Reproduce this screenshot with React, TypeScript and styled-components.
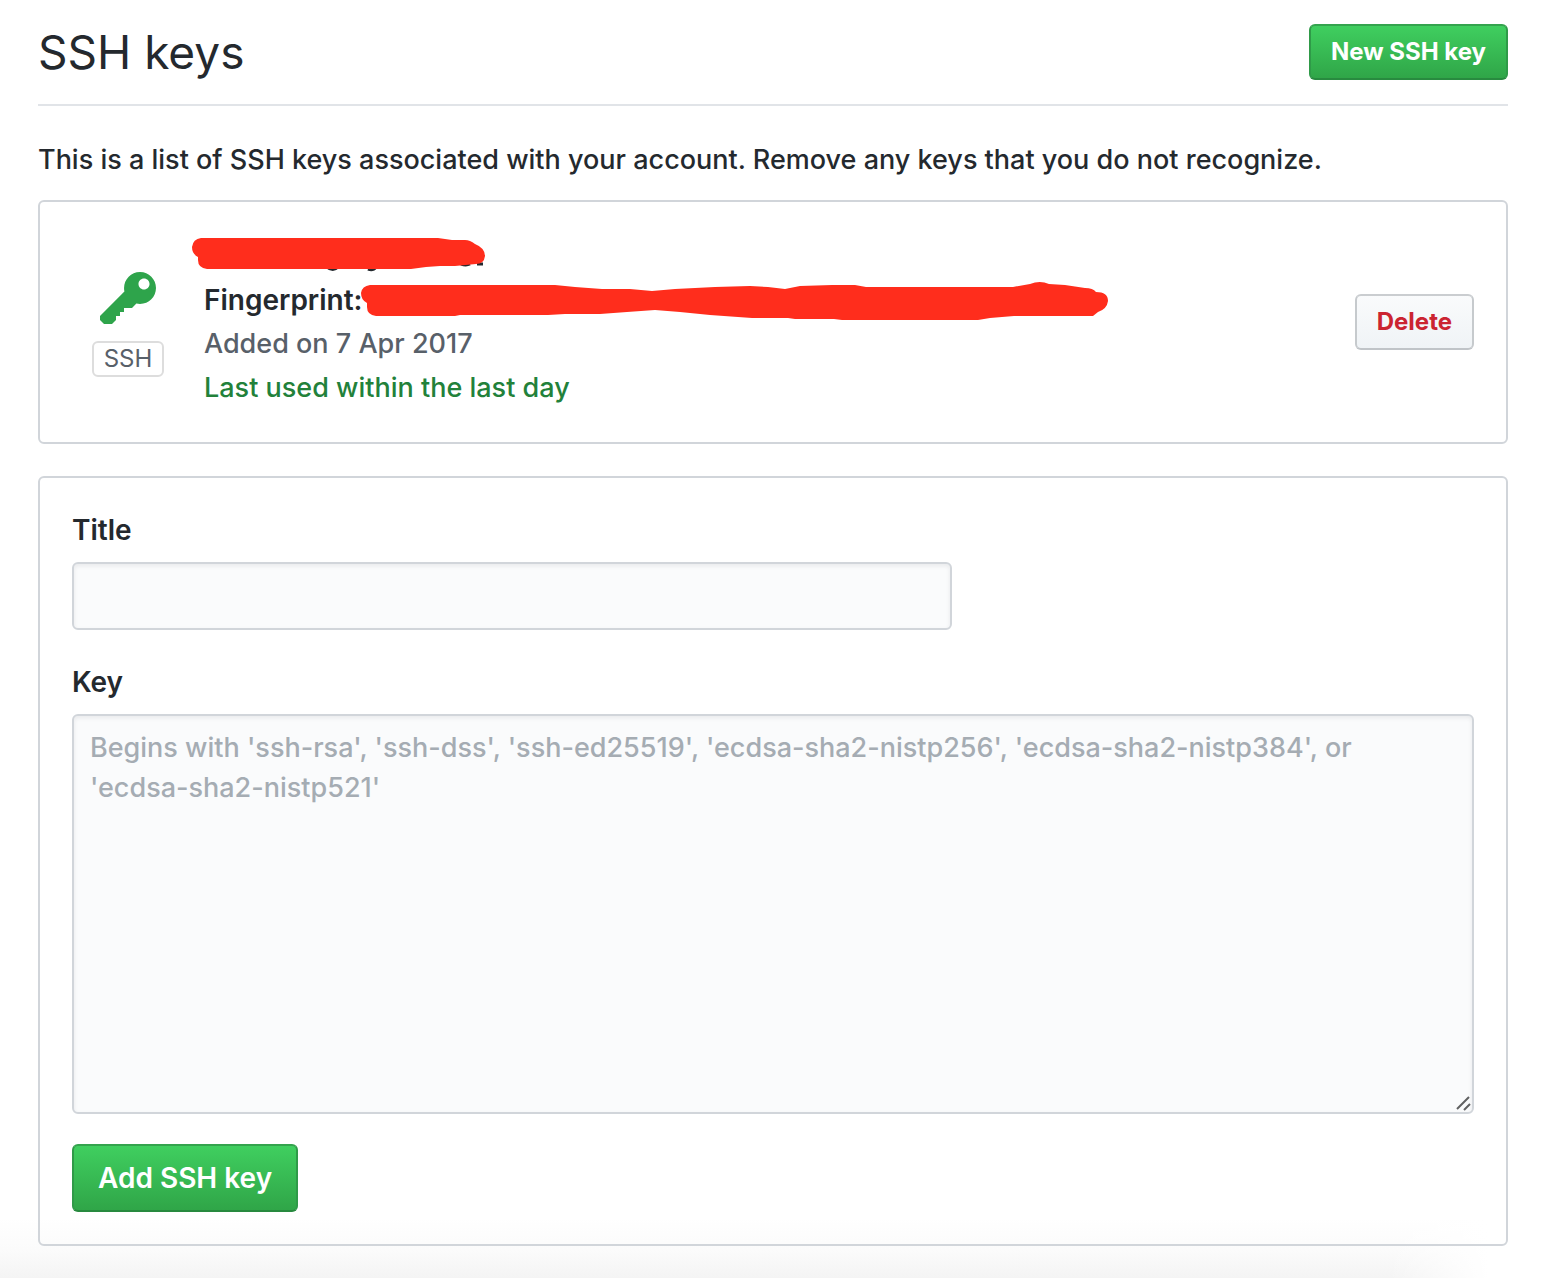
import React from "react";
import styled, { createGlobalStyle, css } from "styled-components";

const GlobalStyle = createGlobalStyle`
  *, *::before, *::after { box-sizing: border-box; }
  body {
    margin: 0;
    background: #fff;
    color: #24292e;
    font-family: Inter, "Liberation Sans", sans-serif;
    font-size: 27px;
    font-weight: 450;
    line-height: 44px;
  }
`;

const Page = styled.main`
  padding: 24px 40px 32px 38px;
  background:
    linear-gradient(to left, #fff 60px, rgba(255, 255, 255, 0) 160px) bottom / 100% 60px no-repeat,
    linear-gradient(to top, #f4f4f4, #fbfbfb 28px, #fff) bottom / 100% 60px no-repeat;
`;

const Header = styled.header`
  display: flex;
  align-items: center;
  justify-content: space-between;
  padding-bottom: 24px;
  border-bottom: 2px solid #e1e4e8;
`;

const Heading = styled.h1`
  margin: 0;
  font-size: 46px;
  line-height: 56px;
  font-weight: 400;
`;

const Intro = styled.p`
  margin: 32px 0 18px;
`;

const Button = styled.button<{ $kind: "primary" | "danger"; $large?: boolean }>`
  flex: none;
  padding: 0 20px;
  height: 56px;
  border: 2px solid;
  border-radius: 6px;
  font: 700 24px/40px Inter, "Liberation Sans", sans-serif;
  background-origin: border-box;
  cursor: pointer;
  ${(p) =>
    p.$kind === "primary"
      ? css`
          color: #fff;
          border-color: #34a34e #2f9a48 #288a3f;
          background-image: linear-gradient(#40d060, #2fa447);
        `
      : css`
          color: #cb2431;
          border-color: #cacdd0 #c6cacd #c0c4c8;
          background-image: linear-gradient(#fafbfc, #eff3f6);
        `}
  ${(p) =>
    p.$large &&
    css`
      align-self: flex-start;
      height: 68px;
      padding: 0 24px;
      font-size: 28px;
      font-weight: 600;
    `}
`;

const panel = css`
  padding: 32px;
  border: 2px solid #d1d5da;
  border-radius: 6px;
`;

const KeyList = styled.ul`
  ${panel}
  margin: 0 0 32px;
  list-style: none;
`;

const KeyItem = styled.li`
  display: flex;
  align-items: center;
`;

const KeyKind = styled.div`
  display: flex;
  flex: none;
  flex-direction: column;
  align-items: center;
  gap: 9px;
  width: 112px;
  margin-right: 20px;
`;

const KeyGlyph = styled.svg`
  display: block;
  width: 56px;
  height: 64px;
  fill: #2ea44b;
`;

const Badge = styled.span`
  padding: 0 10px;
  border: 2px solid #dddddd;
  border-radius: 6px;
  color: #586069;
  font-size: 24px;
  font-weight: 400;
  line-height: 32px;
`;

const Details = styled.div`
  flex: 1;
  min-width: 0;
`;

const Line = styled.div<{ $color?: string; $bold?: boolean }>`
  position: relative;
  min-height: 44px;
  color: ${(p) => p.$color ?? "#24292e"};
  ${(p) =>
    p.$bold &&
    css`
      font-size: 28px;
      font-weight: 600;
    `}
`;

const Anchor = styled.span`
  position: relative;
`;

const Scribble = styled.svg<{ $left: string; $top: number }>`
  position: absolute;
  left: ${(p) => p.$left};
  top: ${(p) => p.$top}px;
  fill: #ff2d1c;
`;

const Form = styled.form`
  ${panel}
  display: flex;
  flex-direction: column;
`;

const Label = styled.label`
  margin-bottom: 12px;
  font-size: 28px;
  font-weight: 600;
  line-height: 40px;
`;

const field = css`
  display: block;
  width: 100%;
  border: 2px solid #d1d5da;
  border-radius: 6px;
  padding: 12px 16px;
  color: #24292e;
  background: #fafbfc;
  box-shadow: inset 0 2px 4px rgba(27, 31, 35, 0.08);
  font: 450 27px/40px Inter, "Liberation Sans", sans-serif;
`;

const TitleInput = styled.input`
  ${field}
  max-width: 880px;
  margin-bottom: 32px;
`;

const KeyBox = styled.div`
  position: relative;
  margin-bottom: 30px;
`;

const KeyInput = styled.textarea`
  ${field}
  height: 400px;
  resize: vertical;
  &::placeholder { color: #a5acb3; opacity: 1; }
  &::-webkit-resizer { background: transparent; }
`;

const Grip = styled.svg`
  position: absolute;
  right: 2px;
  bottom: 2px;
  pointer-events: none;
`;

const keyHint =
  "Begins with 'ssh-rsa', 'ssh-dss', 'ssh-ed25519', 'ecdsa-sha2-nistp256', 'ecdsa-sha2-nistp384', or\n'ecdsa-sha2-nistp521'";

export default function App() {
  return (
    <>
      <GlobalStyle />
      <Page>
        <Header>
          <Heading>SSH keys</Heading>
          <Button type="button" $kind="primary">New SSH key</Button>
        </Header>
        <Intro>
          This is a list of SSH keys associated with your account. Remove any keys that you do not recognize.
        </Intro>
        <KeyList>
          <KeyItem>
            <KeyKind>
              <KeyGlyph viewBox="0 0 14 16" aria-hidden="true">
                <path fillRule="evenodd" d="M12.83 2.17C12.08 1.42 11.14 1.03 10 1c-1.13.03-2.08.42-2.83 1.17S6.04 3.86 6.01 5c0 .3.03.59.09.89L0 12v1l1 1h2l1-1v-1h1v-1h1v-1h2l1.09-1.11c.3.08.59.11.91.11 1.14-.03 2.08-.42 2.83-1.17S13.97 6.14 14 5c-.03-1.14-.42-2.08-1.17-2.83zM11 5.38c-.77 0-1.38-.61-1.38-1.38 0-.77.61-1.38 1.38-1.38.77 0 1.38.61 1.38 1.38 0 .77-.61 1.38-1.38 1.38z" />
              </KeyGlyph>
              <Badge>SSH</Badge>
            </KeyKind>
            <Details>
              <Line $bold>
                <Scribble $left="-14px" $top={0} width="300" height="40" viewBox="190 234 300 40" aria-hidden="true">
                  <g fill="none" stroke="#24292e" strokeWidth="3">
                    <path d="M327 267q6 5 11 0M368 269q5 2 8-2M451 264h4M461 264q5 2 9 0M477 264h6" />
                  </g>
                  <path d="M201 238H438L452 240H465Q470 240 475 244Q485 248 485 256Q484 264 476 264L455 266H440L426 267L411 269H207Q198 268 198 260V257Q192 254 192 247Q193 239 201 238Z" />
                </Scribble>
              </Line>
              <Line $bold>
                <Anchor>
                  Fingerprint:
                  <Scribble $left="calc(100% - 4px)" $top={-4} width="750" height="44" viewBox="359 279 750 44" aria-hidden="true">
                    <path d="M370 285H555L575 287L602 289H630L652 291L675 289L715 287L750 286L768 287L785 289L800 286L832 285H855L866 287H1013L1030 284Q1040 280 1049 284L1065 285L1085 288Q1093 288 1096 292Q1108 292 1108 301Q1107 309 1098 312L1093 316H1014L990 318L978 320H842L834 319H795L788 318H752L710 315L680 312L655 310L627 312L600 314H565L548 315H460L455 316H376Q367 315 367 307V303Q361 300 361 293Q362 286 370 285Z" />
                  </Scribble>
                </Anchor>
              </Line>
              <Line $color="#586069">Added on 7 Apr 2017</Line>
              <Line $color="#22813a">Last used within the last day</Line>
            </Details>
            <Button type="button" $kind="danger">Delete</Button>
          </KeyItem>
        </KeyList>
        <Form onSubmit={(e) => e.preventDefault()}>
          <Label htmlFor="key-title">Title</Label>
          <TitleInput id="key-title" type="text" />
          <Label htmlFor="key-value">Key</Label>
          <KeyBox>
            <KeyInput id="key-value" placeholder={keyHint} />
            <Grip width="16" height="16" viewBox="0 0 16 16" aria-hidden="true">
              <path d="M1 13L13 1M8 14L14 8" stroke="#606162" strokeWidth="2" fill="none" />
            </Grip>
          </KeyBox>
          <Button type="submit" $kind="primary" $large>Add SSH key</Button>
        </Form>
      </Page>
    </>
  );
}
